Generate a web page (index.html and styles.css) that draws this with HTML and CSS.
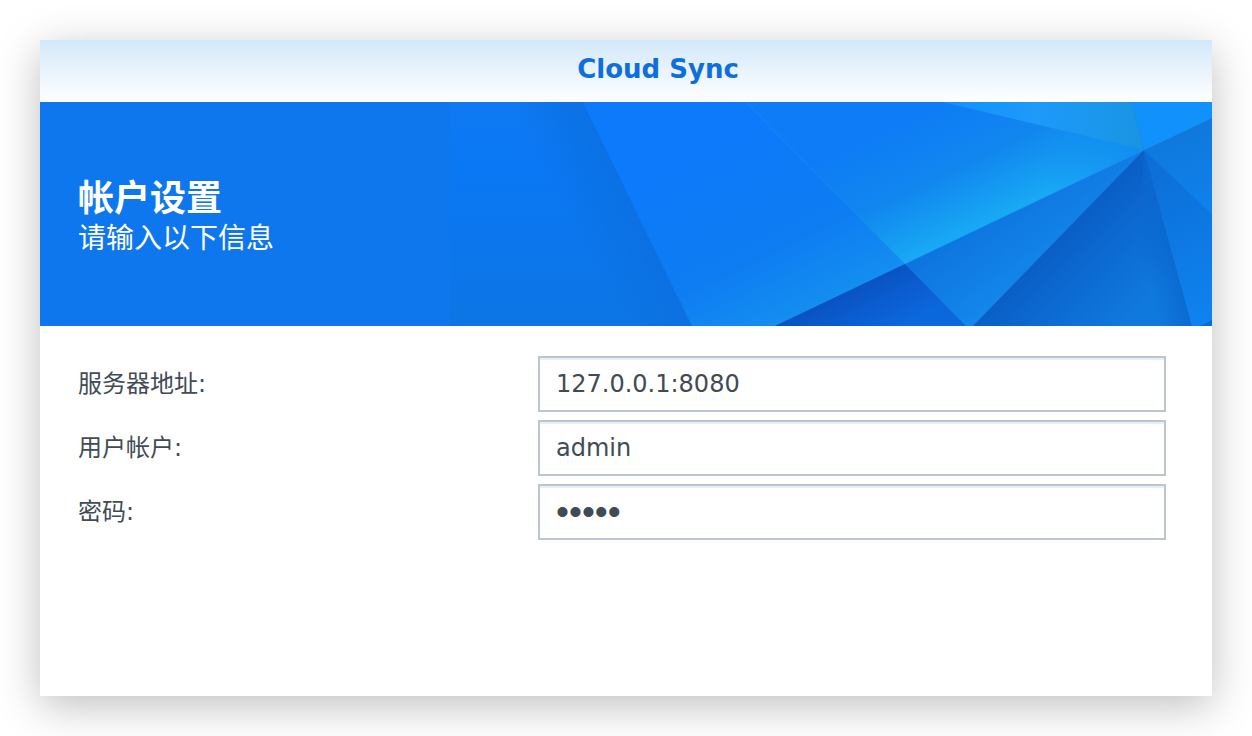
FILE: index.html
```html
<!DOCTYPE html>
<html lang="zh-CN">
<head>
<meta charset="utf-8">
<meta name="viewport" content="width=device-width, initial-scale=1">
<title>Cloud Sync</title>
<link rel="stylesheet" href="styles.css">
</head>
<body>
<main class="dialog">
  <header class="titlebar"><h1 class="title">Cloud Sync</h1></header>
  <section class="banner">
    <div class="banner-text">
      <h2 class="heading">帐户设置</h2>
      <p class="subheading">请输入以下信息</p>
    </div>
    <svg class="banner-art" viewBox="0 0 762 224" preserveAspectRatio="xMaxYMid slice" aria-hidden="true">
      <defs>
        <linearGradient id="base" x1="0" y1="0" x2="0" y2="1"><stop offset="0" stop-color="#0e79f2"/><stop offset=".3" stop-color="#0a77f4"/><stop offset="1" stop-color="#0d76e5"/></linearGradient>
        <linearGradient id="fold" gradientUnits="userSpaceOnUse" x1="100" y1="80" x2="170" y2="46"><stop offset="0" stop-color="#0b70dc" stop-opacity="0"/><stop offset="1" stop-color="#0b6fe2"/></linearGradient>
        <linearGradient id="slab" gradientUnits="userSpaceOnUse" x1="290" y1="20" x2="380" y2="208"><stop offset="0" stop-color="#0c7afb"/><stop offset=".6" stop-color="#0e7cf2"/><stop offset="1" stop-color="#1490f0"/></linearGradient>
        <linearGradient id="glow" gradientUnits="userSpaceOnUse" x1="518" y1="-12" x2="574" y2="105"><stop offset="0" stop-color="#0e7cf7"/><stop offset=".5" stop-color="#1186ee"/><stop offset="1" stop-color="#18aaf5"/></linearGradient>
        <linearGradient id="glow-end" gradientUnits="userSpaceOnUse" x1="600" y1="90" x2="694" y2="46"><stop offset="0" stop-color="#118bf0" stop-opacity="0"/><stop offset="1" stop-color="#118bf0"/></linearGradient>
        <linearGradient id="top" gradientUnits="userSpaceOnUse" x1="500" y1="0" x2="694" y2="20"><stop offset="0" stop-color="#1391fa"/><stop offset=".45" stop-color="#1d9afa"/><stop offset="1" stop-color="#1994e3"/></linearGradient>
        <linearGradient id="wedge" gradientUnits="userSpaceOnUse" x1="535" y1="115" x2="580" y2="180"><stop offset="0" stop-color="#0e75df"/><stop offset="1" stop-color="#1387eb"/></linearGradient>
        <linearGradient id="navy" gradientUnits="userSpaceOnUse" x1="400" y1="185" x2="425" y2="235"><stop offset="0" stop-color="#0952c2"/><stop offset="1" stop-color="#0b67dc"/></linearGradient>
        <linearGradient id="deep" gradientUnits="userSpaceOnUse" x1="605" y1="120" x2="690" y2="205"><stop offset="0" stop-color="#0a5bc1"/><stop offset=".6" stop-color="#0c6dd5"/><stop offset="1" stop-color="#1079de"/></linearGradient>
        <linearGradient id="deep-edge" gradientUnits="userSpaceOnUse" x1="700" y1="188" x2="735" y2="178"><stop offset="0" stop-color="#0a68cf" stop-opacity="0"/><stop offset="1" stop-color="#0a68cf"/></linearGradient>
        <linearGradient id="side" gradientUnits="userSpaceOnUse" x1="700" y1="60" x2="762" y2="210"><stop offset="0" stop-color="#0d6ed7"/><stop offset="1" stop-color="#0e82ee"/></linearGradient>
        <linearGradient id="right" gradientUnits="userSpaceOnUse" x1="735" y1="30" x2="762" y2="112"><stop offset="0" stop-color="#0f78dc"/><stop offset="1" stop-color="#0e83ed"/></linearGradient>
      </defs>
      <path fill="url(#base)" d="M0 0h762v224H0z"/>
      <path fill="url(#fold)" d="M0 0h133l109 224H0z"/>
      <path fill="url(#slab)" d="M133 0h163l159 162-130 62h-83z"/>
      <path fill="url(#glow)" d="M296 0h196l202 48-239 114z"/>
      <path fill="url(#glow-end)" d="M492 0l202 48-239 114z"/>
      <path fill="url(#top)" d="M492 0h190l12 48z"/>
      <path fill="#1191fb" d="M682 0h80v16l-68 32z"/>
      <path fill="url(#navy)" d="M455 162l61 62H325z"/>
      <path fill="url(#wedge)" d="M455 162L694 48 523 224h-7z"/>
      <path fill="url(#deep)" d="M694 48l48 176H523z"/>
      <path fill="url(#deep-edge)" d="M694 48l48 176h-56z"/>
      <path fill="url(#side)" d="M694 48l68 64v112h-20z"/>
      <path fill="url(#right)" d="M694 48l68-32v96z"/>
      <path fill="#0b6bd9" d="M750 224l12-6v6z"/>
      <path fill="none" stroke="#1b9bf9" stroke-opacity=".45" d="M296 0l159 162M455 162L694 48l68-32"/>
    </svg>
  </section>
  <form class="form">
    <div class="row">
      <label class="label" for="server">服务器地址:</label>
      <input class="field" id="server" type="text" value="127.0.0.1:8080">
    </div>
    <div class="row">
      <label class="label" for="account">用户帐户:</label>
      <input class="field" id="account" type="text" value="admin">
    </div>
    <div class="row">
      <label class="label" for="password">密码:</label>
      <input class="field field-password" id="password" type="password" value="admin">
    </div>
  </form>
</main>
</body>
</html>
```
FILE: styles.css
```css
* {
  box-sizing: border-box;
}

body {
  display: flex;
  min-height: 100vh;
  margin: 0;
  padding: 40px;
  background: #fff;
  color: #414b55;
  font-family: Verdana, "DejaVu Sans", "Noto Sans CJK SC", sans-serif;
  font-size: 24px;
}

.dialog {
  flex: 1;
  background: #fff;
  box-shadow: 0 10px 40px rgba(0, 0, 0, 0.25);
}

.titlebar {
  padding: 13px 0 17px 64px;
  background: linear-gradient(#d3e8f9, #fff);
  text-align: center;
}

.title {
  margin: 0;
  color: #0e6ee0;
  font-size: 26px;
  line-height: 32px;
}

.banner {
  display: flex;
  align-items: center;
  justify-content: space-between;
  min-height: 224px;
  padding-left: 38px;
  background: #0f77ee;
  color: #fff;
}

.banner-text {
  flex: none;
  padding-top: 8px;
}

.heading {
  margin: 0;
  font-size: 36px;
  line-height: 42px;
}

.subheading {
  margin: 0;
  font-size: 28px;
  line-height: 38px;
}

.banner-art {
  width: 762px;
  min-width: 0;
  height: 224px;
}

.form {
  display: grid;
  gap: 8px;
  padding: 30px 46px 30px 38px;
}

.row {
  display: grid;
  grid-template-columns: 460fr 628fr;
  align-items: center;
}

.label {
  line-height: 32px;
}

.field {
  width: 100%;
  height: 56px;
  padding: 0 16px;
  border: 2px solid #bcc6d3;
  border-radius: 0;
  outline: none;
  background: #fff;
  box-shadow: inset 0 2px #eceff0;
  color: inherit;
  font: inherit;
}

.field-password {
  font-family: "Liberation Sans", Arial, sans-serif;
  font-size: 37px;
}
```
